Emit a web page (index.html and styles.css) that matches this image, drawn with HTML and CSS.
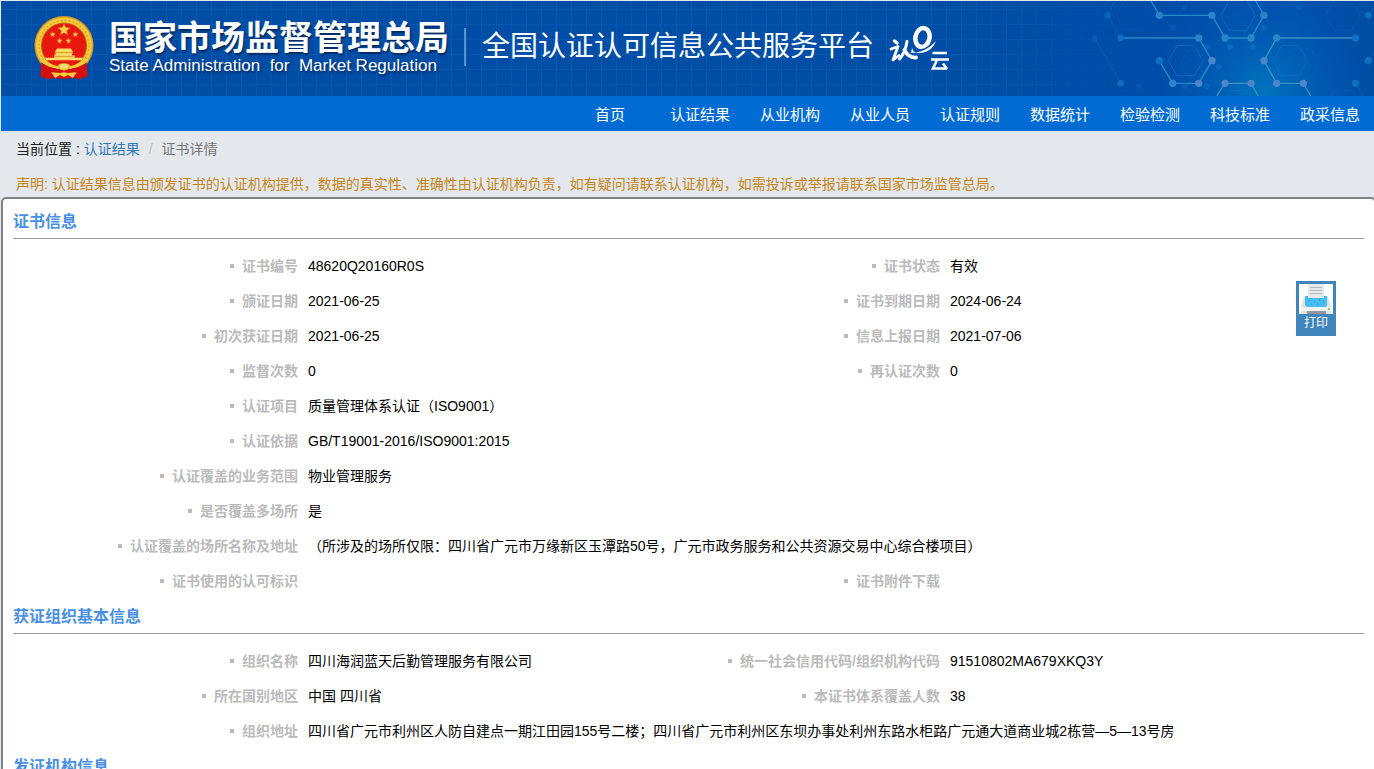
FILE: index.html
```html
<!DOCTYPE html>
<html lang="zh-CN">
<head>
<meta charset="utf-8">
<title>证书详情</title>
<link rel="stylesheet" href="styles.css">
</head>
<body>
<header class="banner">
  <svg class="banner-grid" aria-hidden="true">
    <defs>
      <pattern id="grid" width="15" height="15" patternUnits="userSpaceOnUse"><path d="M0 8.500H15M0.500 0V15" stroke="#0a63bd" stroke-width="1" fill="none" opacity=".5"/></pattern>
    </defs>
    <rect width="100%" height="100%" fill="url(#grid)"/>
  </svg>
  <svg class="banner-net" viewBox="0 3 1242 285" aria-hidden="true">
    <defs>
      <radialGradient id="glow" gradientUnits="userSpaceOnUse" cx="910" cy="270" r="330"><stop offset="0" stop-color="#0074bd"/><stop offset=".5" stop-color="#005cb2" stop-opacity=".8"/><stop offset="1" stop-color="#0050ab" stop-opacity="0"/></radialGradient>
      <linearGradient id="veil"><stop offset="0" stop-color="#004da7" stop-opacity="0"/><stop offset=".45" stop-color="#004da8"/><stop offset=".8" stop-color="#0052b0"/><stop offset="1" stop-color="#004da3"/></linearGradient>
    </defs>
    <rect y="3" width="1242" height="285" fill="url(#veil)"/>
    <rect y="3" width="1242" height="285" fill="url(#glow)"/>
    <g fill="none" stroke="#1a76c6" stroke-width="3" opacity=".6">
      <path d="M651 137h52l26 45-26 45h-52l-26-45zM965 137h52l26 45-26 45h-52l-26-45z"/>
      <path d="M808 1h52l26 45-26 45h-52l-26-45z M808 272h52l22 36h-96z"/>
      <path d="M1122 1h52l26 45-26 45h-52l-26-45zM494 1h52l26 45-26 45h-52l-26-45zM1122 272h52l20 30h-92zM494 272h52l20 30h-92z" opacity=".35"/>
      <path d="M684 150h45l22 40-22 40h-45l-22-40zM1000 145h52l26 45-26 45h-52l-26-45zM783 91l26 50h70l34-58" opacity=".35"/>
      <path d="M465 3l-22 43 39 68M404 114l78 136M1187 250l22 38M1225 46l17-26M1242 155l-17 27" opacity=".8"/>
    </g>
    <g fill="none" stroke="#268bc9" stroke-width="4">
      <path d="M573 3l25 43h158l39 68h78l39-68-25-43"/>
      <path d="M490 114h226l40 68-40 68h-78l-40-68"/>
      <path d="M1187 114H950l-38 68 38 68h80l22 38M770 288l25-38h78l22 38" stroke="#3d8fc9"/>
    </g>
    <g fill="#0f6fc0">
      <circle cx="443" cy="46" r="10" opacity=".6"/><circle cx="404" cy="114" r="9" opacity=".4"/><circle cx="482" cy="114" r="10"/><circle cx="482" cy="250" r="10"/><circle cx="598" cy="182" r="11"/><circle cx="1187" cy="114" r="11"/><circle cx="1187" cy="250" r="11"/><circle cx="1225" cy="46" r="10"/><circle cx="1225" cy="182" r="11"/><circle cx="810" cy="141" r="9" opacity=".7"/><circle cx="878" cy="141" r="9" opacity=".7"/><circle cx="912" cy="83" r="9" opacity=".5"/><circle cx="776" cy="200" r="9" opacity=".7"/><circle cx="742" cy="141" r="9" opacity=".5"/><circle cx="674" cy="258" r="9" opacity=".5"/><circle cx="742" cy="259" r="9" opacity=".5"/><circle cx="674" cy="22" r="9" opacity=".3"/><circle cx="638" cy="83" r="9" opacity=".3"/><circle cx="1016" cy="22" r="9" opacity=".3"/><circle cx="536" cy="259" r="9" opacity=".3"/>
    </g>
    <g fill="#2886c8"><circle cx="598" cy="46" r="11"/><circle cx="756" cy="46" r="11"/><circle cx="716" cy="114" r="11"/><circle cx="795" cy="114" r="11"/><circle cx="873" cy="114" r="11"/><circle cx="912" cy="46" r="11"/><circle cx="950" cy="114" r="11"/><circle cx="638" cy="250" r="11"/></g>
    <g fill="#4c86ca"><circle cx="756" cy="182" r="11"/><circle cx="912" cy="182" r="11"/><circle cx="716" cy="250" r="11"/><circle cx="795" cy="250" r="11"/><circle cx="873" cy="250" r="11"/><circle cx="950" cy="250" r="11"/><circle cx="1030" cy="250" r="11"/></g>
  </svg>
  <div class="brand">
    <svg class="emblem" viewBox="0 0 60 66" role="img" aria-label="国徽">
      <path d="M8 43L7 62l9 2 3-1 11 1 11-1 4 1 8-3-1-18z" fill="#c80d10"/>
      <path d="M9 51l9 5-3 7M51 51l-9 5 3 7" fill="none" stroke="#8e0610" stroke-width="1"/>
      <circle cx="30" cy="30" r="30" fill="#d99a1c"/>
      <circle cx="30" cy="30" r="28.500" fill="#f4c93f"/>
      <circle cx="30" cy="30" r="25.500" fill="none" stroke="#e3a92c" stroke-width="1.500" stroke-dasharray="2 2"/>
      <circle cx="30" cy="30" r="23.500" fill="#b87815"/>
      <circle cx="30" cy="30" r="22.500" fill="#e9180e"/>
      <path d="M30 7.500l1.600 4.300 4.600.2-3.600 2.900 1.200 4.400-3.800-2.500-3.800 2.500 1.200-4.400-3.600-2.900 4.600-.2z" fill="#fbd347"/>
      <path fill="#f6c13c" d="M18.500 15.500l.8 2.100 2.300.1-1.800 1.400.6 2.200-1.900-1.200-1.900 1.200.6-2.200-1.800-1.400 2.300-.1zM41.500 15.500l.8 2.100 2.300.1-1.800 1.400.6 2.200-1.900-1.200-1.900 1.200.6-2.200-1.800-1.400 2.300-.1zM25.500 22l.8 2.100 2.300.1-1.800 1.400.6 2.200-1.900-1.200-1.900 1.200.6-2.200-1.800-1.400 2.300-.1zM34.500 22l.8 2.100 2.300.1-1.800 1.400.6 2.200-1.900-1.200-1.900 1.200.6-2.200-1.800-1.400 2.300-.1z"/>
      <path d="M23 33h14l2 3v2h-1v2h3v2.500h8.500L48 45H12l-1.500-2.500H20V39h2v-1h-1v-2z" fill="#fbdb66"/>
      <path d="M21 37h18M20 41h20" stroke="#d98a1c" stroke-width=".8"/>
      <path d="M7 47q6 5 15 6l8 2 8-2q9-1 15-6l1 14-8 3-4-2-12 1-12-1-4 2-8-3z" fill="#d50f10"/>
      <path d="M10 45q8 5 14 6l6-3 6 3q6-1 14-6l1 2q-6 5-13 6l-8 2-8-2Q15 52 9 47z" fill="#f7cd3f"/>
      <path d="M24 50q6-4 12 0l-2 4q-4 2-8 0z" fill="#fbdb66" stroke="#c9871b" stroke-width=".7"/>
      <path d="M30 57l4 1 9-1-4 6-5-3-4 2-4-2-5 3-4-6 9 1z" fill="#f7c93e"/>
    </svg>
    <div class="agency">
      <span class="agency-cn">国家市场监督管理总局</span>
      <span class="agency-en">State Administration&nbsp; for&nbsp; Market Regulation</span>
    </div>
    <span class="divider"></span>
    <h1 class="platform">全国认证认可信息公共服务平台</h1>
    <svg class="cloud-logo" viewBox="0 0 62 46" role="img" aria-label="认e云">
      <g fill="none" stroke="#fff" stroke-linecap="round" stroke-linejoin="round">
        <path d="M5.500 15l2.500 2" stroke-width="3.500"/>
        <path d="M2 23l7-2.500-5 13.500 6-4.500" stroke-width="2.800"/>
        <path d="M18 15.500C17 22 15 28 10.500 33" stroke-width="3"/>
        <path d="M15.500 24c2 4 5 8 11.500 7.500" stroke-width="3.800"/>
        <ellipse cx="33.500" cy="11.500" rx="7" ry="9.500" stroke-width="4.500" transform="rotate(12 33.500 11.500)"/>
      </g>
      <path d="M22 27c9 0 18-4 25-12-3 8-9 12-17 12-4 0-6-2-7-5z" fill="#fff"/>
      <path d="M24 25c9-1 15-3 20-8" fill="none" stroke="#004da5" stroke-width=".7"/>
      <path d="M43.500 27H58M42 33.500h18M48 34l-4 8.500h14M54 37.500l4 5.500" fill="none" stroke="#fff" stroke-width="2.500"/>
    </svg>
  </div>
</header>
<nav class="menu">
  <a href="#">首页</a><a href="#">认证结果</a><a href="#">从业机构</a><a href="#">从业人员</a><a href="#">认证规则</a><a href="#">数据统计</a><a href="#">检验检测</a><a href="#">科技标准</a><a href="#">政采信息</a>
</nav>
<div class="location">
  <p class="crumbs">当前位置 : <a href="#">认证结果</a><span class="slash">/</span><span class="current">证书详情</span></p>
  <p class="notice">声明: 认证结果信息由颁发证书的认证机构提供，数据的真实性、准确性由认证机构负责，如有疑问请联系认证机构，如需投诉或举报请联系国家市场监管总局。</p>
</div>
<main class="panel">
  <button class="print" type="button">
    <svg viewBox="0 0 34 30" aria-hidden="true">
      <rect width="34" height="30" fill="#fff"/>
      <path d="M5 13h24l3 9v8H2v-8z" fill="#dfe2e4"/>
      <path d="M9 2q0-2 2-2h12q2 0 2 2v12H9z" fill="#e6e9ea"/>
      <path d="M11 3.500h12M11 6.500h12M11 9.500h12" stroke="#b4b8bc"/>
      <path d="M6 12h3v2h16v-2h3v8q0 3-3 3H9q-3 0-3-3z" fill="#45bdf0"/>
      <path d="M10 16h1M15 18h1M20 16h1M24 18h1M12 20h1M18 20h1" stroke="#239bd6"/>
      <path d="M2 23h30v4H2z" fill="#eff1f2"/><path d="M8 27h19v3H8z" fill="#92979b"/><path d="M29 24h2v2h-2z" fill="#7bd650"/>
    </svg>
    <span>打印</span>
  </button>
  <section>
    <h2>证书信息</h2>
    <dl>
      <dt>证书编号</dt><dd>48620Q20160R0S</dd><dt>证书状态</dt><dd>有效</dd>
      <dt>颁证日期</dt><dd>2021-06-25</dd><dt>证书到期日期</dt><dd>2024-06-24</dd>
      <dt>初次获证日期</dt><dd>2021-06-25</dd><dt>信息上报日期</dt><dd>2021-07-06</dd>
      <dt>监督次数</dt><dd>0</dd><dt>再认证次数</dt><dd>0</dd>
      <dt>认证项目</dt><dd class="wide">质量管理体系认证（ISO9001）</dd>
      <dt>认证依据</dt><dd class="wide">GB/T19001-2016/ISO9001:2015</dd>
      <dt>认证覆盖的业务范围</dt><dd class="wide">物业管理服务</dd>
      <dt>是否覆盖多场所</dt><dd class="wide">是</dd>
      <dt>认证覆盖的场所名称及地址</dt><dd class="wide">（所涉及的场所仅限：四川省广元市万缘新区玉潭路50号，广元市政务服务和公共资源交易中心综合楼项目）</dd>
      <dt>证书使用的认可标识</dt><dd></dd><dt>证书附件下载</dt><dd></dd>
    </dl>
  </section>
  <section>
    <h2>获证组织基本信息</h2>
    <dl>
      <dt>组织名称</dt><dd>四川海润蓝天后勤管理服务有限公司</dd><dt>统一社会信用代码/组织机构代码</dt><dd>91510802MA679XKQ3Y</dd>
      <dt>所在国别地区</dt><dd>中国 四川省</dd><dt>本证书体系覆盖人数</dt><dd>38</dd>
      <dt>组织地址</dt><dd class="wide">四川省广元市利州区人防自建点一期江田园155号二楼；四川省广元市利州区东坝办事处利州东路水柜路广元通大道商业城2栋营—5—13号房</dd>
    </dl>
  </section>
  <section>
    <h2>发证机构信息</h2>
  </section>
</main>
</body>
</html>
```
FILE: styles.css
```css
* { box-sizing: border-box; }
html { height: 100%; overflow: hidden; }
body {
  height: 100%;
  margin: 0;
  padding: 1px 0 0 1px;
  overflow: hidden;
  background: #e4e8ec;
  color: #000;
  font: 14px/20px "Liberation Sans", "Noto Sans CJK SC", sans-serif;
}
a { text-decoration: none; }
p, h1, h2, dl, dd { margin: 0; }

.banner { position: relative; background: #004da5; color: #fff; overflow: hidden; }
.banner-grid { position: absolute; inset: 0; width: 100%; height: 100%; }
.banner-net { position: absolute; top: 0; right: 0; height: 100%; }
.brand { position: relative; display: flex; align-items: center; padding: 15px 33px; }
.emblem { width: 60px; height: 65px; flex: none; }
.agency { display: flex; flex-direction: column; margin: 0 0 4px 15px; white-space: nowrap; text-shadow: 1px 2px 2px #00285f; }
.agency-cn { font-size: 34px; line-height: 38px; font-weight: 700; }
.agency-en { font-size: 17px; line-height: 18px; }
.divider { width: 2px; height: 38px; margin: 0 16px 4px 15px; background: #5b92cc; }
.platform { font-size: 28px; line-height: 40px; font-weight: 400; white-space: nowrap; margin-bottom: 4px; }
.cloud-logo { width: 62px; height: 46px; margin-left: 15px; flex: none; }

.menu { display: flex; justify-content: flex-end; height: 35px; margin-right: -1px; background: #006cd3; }
.menu a { width: 90px; color: #fff; font-size: 15px; line-height: 37px; text-align: center; }

.location { padding: 8px 15px 3px; }
.crumbs { margin-bottom: 15px; color: #222; }
.crumbs a { color: #337ab7; }
.slash { padding: 0 9px; color: #bbb; }
.current { color: #777; }
.notice { color: #c5861a; }

.panel {
  position: relative;
  margin-right: -2px;
  padding: 5px 10px 40px;
  border: 2px solid #808488;
  border-radius: 5px;
  background: #fff;
}
h2 {
  height: 35px;
  margin-bottom: 10px;
  border-bottom: 1px solid #999;
  color: #4a90e2;
  font-size: 16px;
  line-height: 36px;
  font-weight: 700;
}
dl {
  display: grid;
  grid-template-columns: 295fr 347fr 295fr 414fr;
  line-height: 35px;
}
dt { padding-right: 10px; color: #bbb; font-weight: 700; text-align: right; white-space: nowrap; }
dt::before {
  content: "";
  display: inline-block;
  width: 4px;
  height: 4px;
  margin-right: 8px;
  vertical-align: 3px;
  background: #bbb;
}
dd { min-height: 35px; min-width: 0; }
.wide { grid-column: span 3; }

.print {
  position: absolute;
  top: 82px;
  right: 38px;
  width: 40px;
  padding: 3px;
  border: 0;
  background: #3f84ba;
  color: #fff;
  font: 12px/19px "Liberation Sans", "Noto Sans CJK SC", sans-serif;
}
.print svg { display: block; width: 34px; height: 30px; }
```
